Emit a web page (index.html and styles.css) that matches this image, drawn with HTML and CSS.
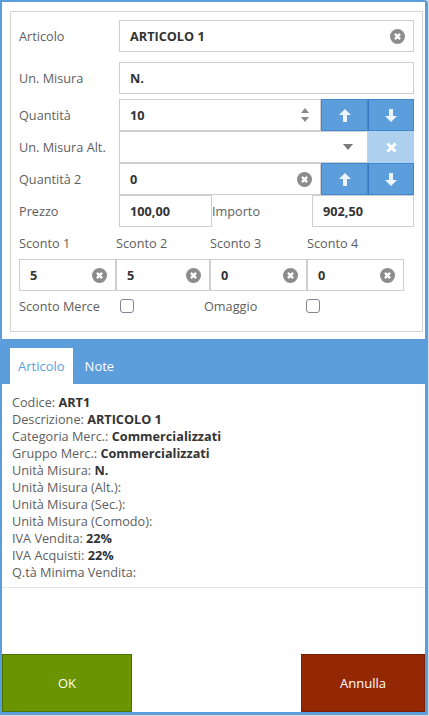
FILE: index.html
```html
<!DOCTYPE html>
<html lang="it">
<head>
<meta charset="utf-8">
<title>Articolo</title>
<link rel="stylesheet" href="styles.css">
</head>
<body>
<div class="dialog">
  <div class="form-area">
    <div class="panel">
      <div class="row row-first">
        <span class="lbl">Articolo</span>
        <div class="field grow"><span class="val">ARTICOLO 1</span>
          <svg class="clear" width="15" height="15" viewBox="0 0 14 14"><circle cx="7" cy="7" r="7" fill="#8c8c8c"/><path d="M4.6 4.6l4.8 4.8M9.4 4.6l-4.8 4.8" stroke="#fff" stroke-width="2.2"/></svg>
        </div>
      </div>
      <div class="row row-second">
        <span class="lbl">Un. Misura</span>
        <div class="field grow"><span class="val">N.</span></div>
      </div>
      <div class="row">
        <span class="lbl">Quantità</span>
        <div class="field grow"><span class="val">10</span>
          <svg class="spin" width="10" height="16" viewBox="0 0 10 16"><path d="M1 6 L5 1 L9 6 Z M1 10 L9 10 L5 15 Z" fill="#8a8a8a"/></svg>
        </div>
        <button class="btn-blue" type="button"><svg width="12" height="13" viewBox="0 0 12 13"><path d="M6 0 L12 6 H8 V13 H4 V6 H0 Z" fill="#eef4fb"/></svg></button>
        <button class="btn-blue" type="button"><svg width="12" height="13" viewBox="0 0 12 13"><path d="M6 13 L12 7 H8 V0 H4 V7 H0 Z" fill="#eef4fb"/></svg></button>
      </div>
      <div class="row">
        <span class="lbl">Un. Misura Alt.</span>
        <div class="field grow">
          <svg class="caret" width="10" height="6" viewBox="0 0 10 6"><path d="M0 0 H10 L5 6 Z" fill="#7a7a7a"/></svg>
        </div>
        <button class="btn-light" type="button"><svg width="11" height="11" viewBox="0 0 11 11"><path d="M1.5 1.5l8 8M9.5 1.5l-8 8" stroke="#fff" stroke-width="3"/></svg></button>
      </div>
      <div class="row">
        <span class="lbl">Quantità 2</span>
        <div class="field grow"><span class="val">0</span>
          <svg class="clear" width="15" height="15" viewBox="0 0 14 14"><circle cx="7" cy="7" r="7" fill="#8c8c8c"/><path d="M4.6 4.6l4.8 4.8M9.4 4.6l-4.8 4.8" stroke="#fff" stroke-width="2.2"/></svg>
        </div>
        <button class="btn-blue" type="button"><svg width="12" height="13" viewBox="0 0 12 13"><path d="M6 0 L12 6 H8 V13 H4 V6 H0 Z" fill="#eef4fb"/></svg></button>
        <button class="btn-blue" type="button"><svg width="12" height="13" viewBox="0 0 12 13"><path d="M6 13 L12 7 H8 V0 H4 V7 H0 Z" fill="#eef4fb"/></svg></button>
      </div>
      <div class="row">
        <span class="lbl">Prezzo</span>
        <div class="field price"><span class="val">100,00</span></div>
        <span class="lbl lbl-imp">Importo</span>
        <div class="field amount"><span class="val">902,50</span></div>
      </div>
      <div class="sconti-lbl">
        <span>Sconto 1</span><span>Sconto 2</span><span>Sconto 3</span><span>Sconto 4</span>
      </div>
      <div class="sconti">
        <div class="field"><span class="val">5</span><svg class="clear" width="15" height="15" viewBox="0 0 14 14"><circle cx="7" cy="7" r="7" fill="#8c8c8c"/><path d="M4.6 4.6l4.8 4.8M9.4 4.6l-4.8 4.8" stroke="#fff" stroke-width="2.2"/></svg></div>
        <div class="field"><span class="val">5</span><svg class="clear" width="15" height="15" viewBox="0 0 14 14"><circle cx="7" cy="7" r="7" fill="#8c8c8c"/><path d="M4.6 4.6l4.8 4.8M9.4 4.6l-4.8 4.8" stroke="#fff" stroke-width="2.2"/></svg></div>
        <div class="field"><span class="val">0</span><svg class="clear" width="15" height="15" viewBox="0 0 14 14"><circle cx="7" cy="7" r="7" fill="#8c8c8c"/><path d="M4.6 4.6l4.8 4.8M9.4 4.6l-4.8 4.8" stroke="#fff" stroke-width="2.2"/></svg></div>
        <div class="field"><span class="val">0</span><svg class="clear" width="15" height="15" viewBox="0 0 14 14"><circle cx="7" cy="7" r="7" fill="#8c8c8c"/><path d="M4.6 4.6l4.8 4.8M9.4 4.6l-4.8 4.8" stroke="#fff" stroke-width="2.2"/></svg></div>
      </div>
      <div class="checks">
        <span class="lbl-cb">Sconto Merce</span><span class="cb"></span>
        <span class="lbl-cb lbl-cb2">Omaggio</span><span class="cb"></span>
      </div>
    </div>
  </div>
  <div class="tabs">
    <span class="tab active">Articolo</span>
    <span class="tab">Note</span>
  </div>
  <div class="info">
    <div>Codice: <b>ART1</b></div>
    <div>Descrizione: <b>ARTICOLO 1</b></div>
    <div>Categoria Merc.: <b>Commercializzati</b></div>
    <div>Gruppo Merc.: <b>Commercializzati</b></div>
    <div>Unità Misura: <b>N.</b></div>
    <div>Unità Misura (Alt.):</div>
    <div>Unità Misura (Sec.):</div>
    <div>Unità Misura (Comodo):</div>
    <div>IVA Vendita: <b>22%</b></div>
    <div>IVA Acquisti: <b>22%</b></div>
    <div>Q.tà Minima Vendita:</div>
  </div>
  <div class="spacer"></div>
  <div class="actions">
    <button class="btn-ok" type="button">OK</button>
    <button class="btn-cancel" type="button">Annulla</button>
  </div>
</div>
</body>
</html>
```

FILE: styles.css
```css
* { box-sizing: border-box; }
html, body { margin: 0; padding: 0; }
body {
  background: #dcdcdc;
  font-family: "Open Sans", "Liberation Sans", sans-serif;
  font-size: 12.7px;
  color: #5e5e5e;
  width: 429px;
  height: 716px;
  overflow: hidden;
}
.dialog {
  width: 428px;
  height: 715px;
  border: 2px solid #5c9ddc;
  border-right-width: 3px;
  border-bottom-width: 3px;
  border-top-right-radius: 4px;
  background: #fff;
  display: flex;
  flex-direction: column;
}
.form-area {
  padding: 9px 2px 7px 8px;
  background: #fff;
}
.panel {
  border: 1px solid #d4d4d4;
  padding: 8px 8px 18px 8px;
}
.row {
  display: flex;
  align-items: center;
  height: 32px;
}
.row-first { margin-bottom: 10px; }
.row-second { margin-bottom: 5px; }
.lbl {
  width: 100px;
  flex: none;
  white-space: nowrap;
}
.field {
  height: 32px;
  border: 1px solid #cfcfcf;
  display: flex;
  align-items: center;
  padding: 0 8px 0 10px;
  background: #fff;
}
.field.grow { flex: 1; }
.val {
  font-weight: 700;
  color: #333;
  flex: 1;
}
.clear { flex: none; margin-left: auto; }
.spin { flex: none; margin-left: auto; margin-right: 2px; }
.caret { flex: none; margin-left: auto; margin-right: 6px; }
.btn-blue, .btn-light {
  width: 47px;
  height: 32px;
  flex: none;
  border: 1px solid #3f88d0;
  background: #5c9ddc;
  padding: 0;
  display: flex;
  align-items: center;
  justify-content: center;
}
.btn-blue + .btn-blue { width: 46px; border-left-color: #3478c0; }
.btn-light {
  width: 46px;
  border-color: #aed0ef;
  background: #aed0ef;
}
.price { width: 93px; }
.lbl-imp { width: 100px; }
.amount { width: 102px; }
.sconti-lbl {
  display: grid;
  grid-template-columns: 97px 94px 97px 97px;
  height: 18px;
  line-height: 18px;
  margin: 7px 0;
}
.sconti {
  display: grid;
  grid-template-columns: 97px 94px 97px 97px;
}
.sconti .field { padding-left: 10px; padding-right: 8px; }
.checks {
  display: flex;
  align-items: center;
  height: 14px;
  margin-top: 8px;
}
.lbl-cb { width: 101px; flex: none; }
.lbl-cb2 { width: 102px; margin-left: 70px; }
.cb {
  width: 14px;
  height: 14px;
  flex: none;
  border: 1px solid #848494;
  border-radius: 3px;
  background: #fff;
}
.tabs {
  background: #5c9ddc;
  height: 45px;
  padding: 9px 0 0 8px;
  display: flex;
  align-items: flex-end;
}
.tab {
  height: 36px;
  line-height: 36px;
  padding: 0 8px;
  color: #fff;
  font-size: 13px;
}
.tab + .tab { margin-left: 4px; }
.tab.active {
  background: #fff;
  color: #5c9ddc;
}
.info {
  padding: 10px 10px 6px 10px;
  line-height: 17px;
  border-bottom: 1px solid #e6e6e6;
}
.info b { color: #333; }
.spacer { flex: 1; }
.actions {
  height: 58px;
  display: flex;
  justify-content: space-between;
}
.actions button {
  height: 58px;
  font-family: "Open Sans", "Liberation Sans", sans-serif;
  font-size: 13px;
  color: #fff;
  padding: 0;
}
.btn-ok {
  width: 130px;
  background: #6a9500;
  border: 1px solid #4f7100;
}
.btn-cancel {
  width: 124px;
  background: #952804;
  border: 1px solid #7a1e00;
}
```
